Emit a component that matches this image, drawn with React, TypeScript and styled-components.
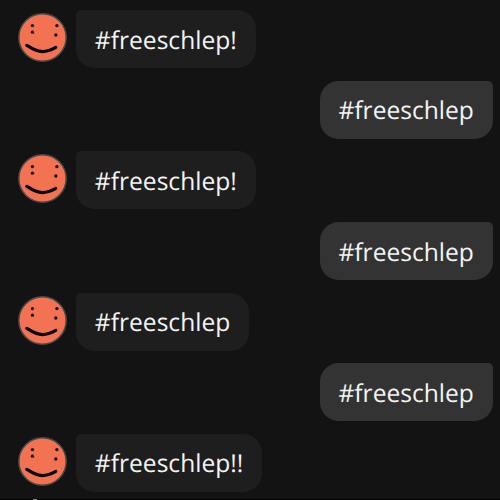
import styled, { createGlobalStyle } from 'styled-components';

const GlobalStyle = createGlobalStyle`
  * {
    box-sizing: border-box;
  }

  body {
    margin: 0;
    background-color: #131313;
  }
`;

const Chat = styled.main`
  display: flex;
  flex-direction: column;
  width: 500px;
  height: 500px;
  background-color: #131313;
  overflow: hidden;
`;

const Messages = styled.div`
  display: flex;
  flex: 1;
  min-height: 0;
  flex-direction: column;
  gap: 12.67px;
  padding: 9.9px 7.3px 0 18px;
  overflow: hidden;
`;

const Row = styled.div<{ $own: boolean }>`
  display: flex;
  flex: none;
  height: 58px;
  gap: 9px;
  justify-content: ${({ $own }) => ($own ? 'flex-end' : 'flex-start')};
`;

const Bubble = styled.div<{ $own: boolean }>`
  height: 58px;
  padding: 0.65px 18.8px 0;
  border-radius: ${({ $own }) =>
    $own ? '18.5px 5px 18.5px 18.5px' : '5px 18.5px 18.5px 18.5px'};
  background-color: ${({ $own }) => ($own ? '#333333' : '#1e1e1e')};
  color: #f4f4f4;
  font-family: 'Open Sans', 'Noto Sans', sans-serif;
  font-size: 24.6px;
  line-height: 60px;
  text-rendering: geometricPrecision;
  white-space: nowrap;
`;

const Face = styled.svg`
  flex: none;
  width: 49px;
  height: 49px;
  margin-top: 3.1px;
`;

const Footer = styled.footer`
  flex: none;
  height: 1px;
  padding-left: 33px;
  background-color: #000;
`;

const FooterMark = styled.div`
  width: 4px;
  height: 1px;
  background-color: #858585;
`;

const Avatar = () => (
  <Face viewBox="0 0 49 49">
    <circle cx="24.5" cy="24.5" r="23.7" fill="#f27252" stroke="#454a4a" strokeWidth="1.5" />
    <circle cx="14.4" cy="12.6" r="1.65" fill="#100b0a" />
    <circle cx="14.4" cy="19.2" r="1.65" fill="#100b0a" />
    <circle cx="38.9" cy="12.6" r="1.65" fill="#100b0a" />
    <circle cx="37.8" cy="22" r="1.65" fill="#100b0a" />
    <path
      d="M8.7 32.3 C13 35 18 38.5 24.5 38.6 C30 38.5 34 36.5 37.8 34.4"
      fill="none"
      stroke="#080404"
      strokeWidth="3.1"
      strokeLinecap="round"
    />
  </Face>
);

const messages = [
  { id: 1, own: false, text: '#freeschlep!' },
  { id: 2, own: true, text: '#freeschlep' },
  { id: 3, own: false, text: '#freeschlep!' },
  { id: 4, own: true, text: '#freeschlep' },
  { id: 5, own: false, text: '#freeschlep' },
  { id: 6, own: true, text: '#freeschlep' },
  { id: 7, own: false, text: '#freeschlep!!' },
];

const App = () => (
  <>
    <GlobalStyle />
    <Chat>
      <Messages>
        {messages.map(({ id, own, text }) => (
          <Row key={id} $own={own}>
            {!own && <Avatar />}
            <Bubble $own={own}>{text}</Bubble>
          </Row>
        ))}
      </Messages>
      <Footer>
        <FooterMark />
      </Footer>
    </Chat>
  </>
);

export default App;
